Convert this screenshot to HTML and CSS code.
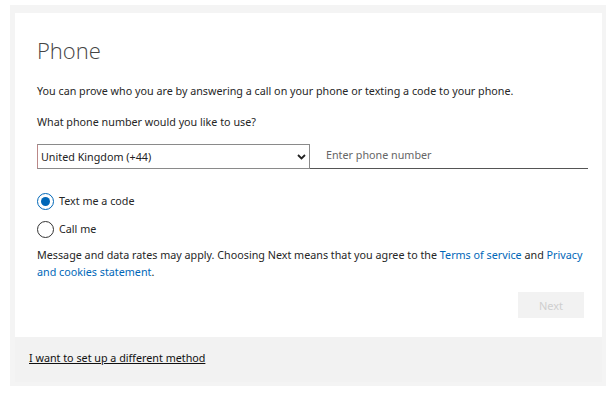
FILE: index.html
```html
<!DOCTYPE html>
<html lang="en">
<head>
    <meta charset="UTF-8">
    <meta name="viewport" content="width=device-width, initial-scale=1.0">
    <title>Phone</title>
    <link rel="stylesheet" href="styles.css">
</head>
<body>
    <div class="frame">
        <div class="card">
            <div class="card-body">
                <h1>Phone</h1>
                <p class="intro">You can prove who you are by answering a call on your phone or texting a code to your phone.</p>
                <p class="question">What phone number would you like to use?</p>

                <div class="phone-row">
                    <div class="select-box">
                        <span>United Kingdom (+44)</span>
                        <svg class="chevron" width="9" height="6" viewBox="0 0 9 6">
                            <path d="M1 1 L4.5 4.5 L8 1" fill="none" stroke="#222" stroke-width="1.8"/>
                        </svg>
                    </div>
                    <div class="phone-input">Enter phone number</div>
                </div>

                <div class="options">
                    <label class="radio">
                        <span class="dot checked"></span>
                        Text me a code
                    </label>
                    <label class="radio">
                        <span class="dot"></span>
                        Call me
                    </label>
                </div>

                <p class="terms">Message and data rates may apply. Choosing Next means that you agree to the <a href="#">Terms of service</a> and <a href="#">Privacy and cookies statement</a>.</p>

                <div class="actions">
                    <button class="next-btn">Next</button>
                </div>
            </div>
            <div class="card-footer">
                <a href="#">I want to set up a different method</a>
            </div>
        </div>
    </div>
</body>
</html>
```

FILE: styles.css
```css
* {
    margin: 0;
    padding: 0;
    box-sizing: border-box;
}

body {
    font-family: 'Noto Sans', 'Open Sans', sans-serif;
    background: #fff;
    color: #262626;
    font-size: 10.75px;
}

.frame {
    margin: 5px 9px 0 10px;
    padding: 8px 4px 4px 5px;
    background: #f4f4f4;
}

.card {
    background: #fff;
    height: 369px;
    display: flex;
    flex-direction: column;
}

.card-body {
    flex: 1;
    padding: 22px 14px 0 22px;
}

h1 {
    font-family: 'Open Sans', sans-serif;
    font-weight: 300;
    font-size: 22px;
    color: #444;
    line-height: 30px;
    margin-bottom: 18px;
}

.intro {
    line-height: 16px;
    margin-bottom: 15px;
}

.question {
    line-height: 16px;
    margin-bottom: 14px;
}

.phone-row {
    display: flex;
    align-items: flex-end;
    margin-bottom: 24px;
}

.select-box {
    width: 273px;
    height: 25px;
    border: 1px solid #8a8a8a;
    border-left-color: #b88;
    display: flex;
    align-items: center;
    justify-content: space-between;
    padding: 0 3px 0 3px;
    color: #222;
}

.phone-input {
    flex: 1;
    border-bottom: 1px solid #555;
    padding: 0 0 6px 16px;
    color: #666;
}

.options {
    display: flex;
    flex-direction: column;
    gap: 11px;
    margin-bottom: 9px;
}

.radio {
    display: flex;
    align-items: center;
    gap: 5px;
    line-height: 17px;
}

.dot {
    width: 17px;
    height: 17px;
    border: 1px solid #333;
    border-radius: 50%;
    display: flex;
    align-items: center;
    justify-content: center;
}

.dot.checked {
    border-color: #0067b8;
}

.dot.checked::after {
    content: "";
    width: 9px;
    height: 9px;
    border-radius: 50%;
    background: #0067b8;
}

.terms {
    line-height: 17px;
}

.terms a {
    color: #0067b8;
    text-decoration: none;
}

.actions {
    display: flex;
    justify-content: flex-end;
    margin-top: 11px;
    margin-right: 4px;
}

.next-btn {
    width: 66px;
    height: 26px;
    border: none;
    background: #f2f2f2;
    color: #cfcfcf;
    font-family: inherit;
    font-size: 11px;
}

.card-footer {
    height: 45px;
    background: #f2f2f2;
    padding: 14px 14px 0 14px;
}

.card-footer a {
    color: #111;
    text-decoration: underline;
}
```
